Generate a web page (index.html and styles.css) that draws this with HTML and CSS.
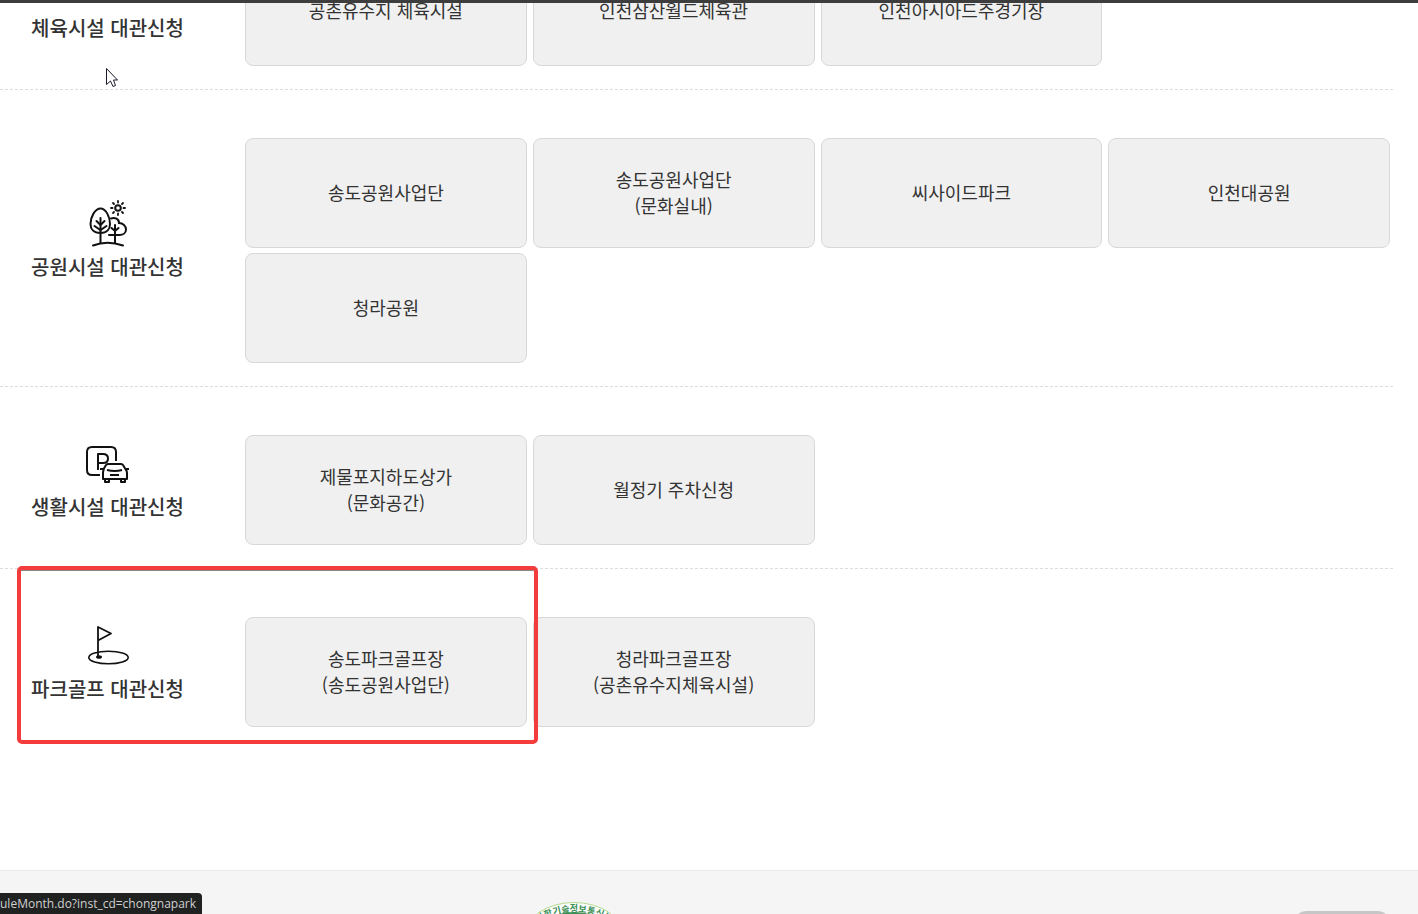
FILE: index.html
```html
<!DOCTYPE html>
<html lang="ko">
<head>
<meta charset="utf-8">
<title>대관신청</title>
<link rel="stylesheet" href="styles.css">
</head>
<body>
<div class="topbar"></div>
<main class="rental">
  <section class="group">
    <div class="group-label">
      <span class="group-icon"></span>
      <h2 class="group-title">체육시설 대관신청</h2>
    </div>
    <div class="cards">
      <button class="card" type="button">공촌유수지 체육시설</button>
      <button class="card" type="button">인천삼산월드체육관</button>
      <button class="card" type="button">인천아시아드주경기장</button>
    </div>
  </section>

  <section class="group">
    <div class="group-label">
      <svg class="group-icon" viewBox="0 0 60 60" fill="none" stroke="#111" stroke-width="2" stroke-linecap="round" aria-hidden="true">
        <path d="M22.500 50V25M22.500 40C15.500 40 12.500 36 12.500 31C12.500 24 17 15.500 22.500 15.500S32 24 32 31C32 36 29 40 22.500 40"/>
        <path d="M18.500 28L22.500 32L26.500 28M16.500 33L22.500 37L28.500 33"/>
        <path d="M33 25.500C37 24 41 26 41 30C45 30 48 33 48 36.500C48 40 45 42 41.500 42H31"/>
        <path d="M37 50V32M33.500 35L37 38L40.500 35"/>
        <path d="M15 52.500C24 49 35 49 45 52.500"/>
        <circle cx="40" cy="15" r="2.800"/>
        <path stroke-width="1.800" d="M40 8V9.500M40 20.500V22M33 15H34.500M45.500 15H47M35 10L36 11M44 19L45 20M45 10L44 11M36 19L35 20"/>
      </svg>
      <h2 class="group-title">공원시설 대관신청</h2>
    </div>
    <div class="cards">
      <button class="card" type="button">송도공원사업단</button>
      <button class="card" type="button">송도공원사업단<br>(문화실내)</button>
      <button class="card" type="button">씨사이드파크</button>
      <button class="card" type="button">인천대공원</button>
      <button class="card" type="button">청라공원</button>
    </div>
  </section>

  <section class="group">
    <div class="group-label">
      <svg class="group-icon" viewBox="0 0 60 60" fill="none" stroke="#111" stroke-width="2" stroke-linejoin="round" aria-hidden="true">
        <path d="M22 42H14Q9 42 9 37V19Q9 14 14 14H33Q38 14 38 19V28"/>
        <path d="M20 37V21H25Q30 21 30 25.500T25 30H20"/>
        <path d="M25 37L28 32Q28.500 31 30 31H43Q44.500 31 45 32L48 37Q49 38 49 40V46H25V40Q25 38 26 36M22 36H25M48 36H51"/>
        <path d="M29 37Q37 39 44 37M32 42H41M27 46V49H31V46M43 46V49H47V46"/>
      </svg>
      <h2 class="group-title">생활시설 대관신청</h2>
    </div>
    <div class="cards">
      <button class="card" type="button">제물포지하도상가<br>(문화공간)</button>
      <button class="card" type="button">월정기 주차신청</button>
    </div>
  </section>

  <section class="group">
    <div class="group-label">
      <svg class="group-icon" viewBox="0 0 60 60" fill="none" stroke="#111" stroke-linejoin="round" aria-hidden="true">
        <ellipse cx="30.500" cy="42.500" rx="19.700" ry="6.300" stroke-width="1.600"/>
        <path stroke-width="1.800" d="M20 41.500V12L33 18.500L20 25.500"/>
        <ellipse cx="21" cy="42" rx="3" ry="1.800" fill="#111" stroke="none"/>
      </svg>
      <h2 class="group-title">파크골프 대관신청</h2>
    </div>
    <div class="cards">
      <button class="card" type="button">송도파크골프장<br>(송도공원사업단)</button>
      <button class="card" type="button">청라파크골프장<br>(공촌유수지체육시설)</button>
    </div>
    <div class="highlight"></div>
  </section>
</main>

<footer class="footer">
  <svg class="emblem" viewBox="0 0 98 66" role="img" aria-label="과학기술정보통신부">
    <defs><path id="arc" d="M7 33A42 23 0 0 1 91 33"/></defs>
    <ellipse cx="49" cy="33" rx="48.500" ry="32.500" fill="#fff" stroke="#b5d98c"/>
    <ellipse cx="49" cy="33" rx="38" ry="23" fill="#3c8f57"/>
    <text class="emblem-text"><textPath href="#arc" startOffset="50%" text-anchor="middle">과학기술정보통신부</textPath></text>
  </svg>
  <button class="footer-button" type="button" aria-label="바로가기"></button>
</footer>

<div class="status">uleMonth.do?inst_cd=chongnapark</div>
<svg class="cursor" viewBox="0 0 12 20" aria-hidden="true">
  <path d="M.5 .5V16.500L4.500 13L7 18.500L9.500 17.500L7.500 12H11.500Z" fill="#fff" stroke="#1a1a2a"/>
</svg>
</body>
</html>
```

FILE: styles.css
```css
* { box-sizing: border-box; }

body {
  display: flex;
  flex-direction: column;
  height: 100vh;
  margin: 0;
  overflow: hidden;
  background: #fff;
  color: #333;
  font-family: "Noto Sans CJK KR", sans-serif;
}

.topbar {
  position: fixed;
  inset: 0 0 auto;
  z-index: 2;
  height: 3px;
  background: #3d3d3d;
}

/* The list is scrolled so that its first group is cut by the top bar. */
.rental {
  flex: none;
  margin: -92px 25px 0 0;
  padding-bottom: 120px;
}

.group {
  position: relative;
  display: grid;
  grid-template-columns: 215px 1fr;
  column-gap: 30px;
  align-items: center;
  border-bottom: 1px dashed #ddd;
}

.group:last-child { border-bottom: 0; }

.group-label {
  display: flex;
  flex-direction: column;
  align-items: center;
}

.group-icon {
  width: 60px;
  height: 60px;
}

.group-title {
  margin: 0;
  padding-bottom: 2px;
  font-size: 20px;
  font-weight: 500;
  line-height: 28px;
  white-space: nowrap;
}

.cards {
  display: grid;
  grid-template-columns: repeat(4, 1fr);
  gap: 5px 6px;
  padding: 48px 3px 23px 0;
}

.card {
  height: 110px;
  padding: 0 8px 3px;
  border: 1px solid #d8d8d8;
  border-radius: 8px;
  background: #f0f0f0;
  color: #333;
  font-family: inherit;
  font-size: 18px;
  line-height: 26px;
}

.highlight {
  position: absolute;
  top: -3px;
  left: 17px;
  width: 521px;
  height: 178px;
  border: 4px solid #f43c3c;
  border-radius: 5px;
  box-shadow: inset 0 1px 0 #888;
  pointer-events: none;
}

.footer {
  display: flex;
  flex: 1;
  align-items: flex-start;
  justify-content: space-between;
  min-height: 0;
  padding: 31px 28px 0 525px;
  overflow: hidden;
  border-top: 1px solid #e9e9e9;
  background: #f5f5f5;
}

.emblem {
  flex: none;
  width: 98px;
  height: 66px;
}

.emblem-text {
  fill: #3c8f57;
  font-size: 9px;
  font-weight: 700;
}

.footer-button {
  flex: none;
  width: 96px;
  height: 40px;
  margin-top: 9px;
  border: 0;
  border-radius: 12px;
  background: #c6c6c6;
}

.status {
  position: fixed;
  bottom: 0;
  left: 0;
  padding-right: 6px;
  border-radius: 0 4px 0 0;
  background: #202221;
  color: #d0d0d0;
  font-family: "Open Sans", sans-serif;
  font-size: 12px;
  line-height: 21px;
  white-space: nowrap;
}

.cursor {
  position: fixed;
  top: 68px;
  left: 106px;
  width: 12px;
  height: 20px;
}
```
